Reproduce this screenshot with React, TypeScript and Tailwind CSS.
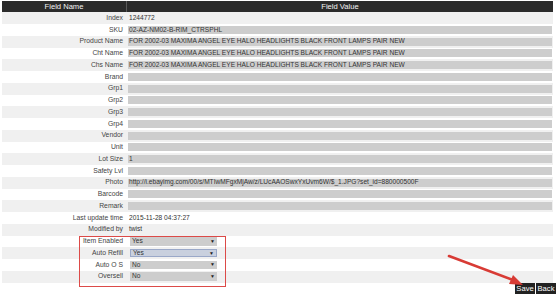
const rows: { label: string; value?: string; kind: "text" | "input" | "select" }[] = [
  { label: "Index", value: "1244772", kind: "text" },
  { label: "SKU", value: "02-AZ-NM02-B-RIM_CTRSPHL", kind: "input" },
  { label: "Product Name", value: "FOR 2002-03 MAXIMA ANGEL EYE HALO HEADLIGHTS BLACK FRONT LAMPS PAIR NEW", kind: "input" },
  { label: "Cht Name", value: "FOR 2002-03 MAXIMA ANGEL EYE HALO HEADLIGHTS BLACK FRONT LAMPS PAIR NEW", kind: "input" },
  { label: "Chs Name", value: "FOR 2002-03 MAXIMA ANGEL EYE HALO HEADLIGHTS BLACK FRONT LAMPS PAIR NEW", kind: "input" },
  { label: "Brand", kind: "input" },
  { label: "Grp1", kind: "input" },
  { label: "Grp2", kind: "input" },
  { label: "Grp3", kind: "input" },
  { label: "Grp4", kind: "input" },
  { label: "Vendor", kind: "input" },
  { label: "Unit", kind: "input" },
  { label: "Lot Size", value: "1", kind: "input" },
  { label: "Safety Lvl", kind: "input" },
  { label: "Photo", value: "http://i.ebayimg.com/00/s/MTIwMFgxMjAw/z/LUcAAOSwxYxUvm6W/$_1.JPG?set_id=880000500F", kind: "input" },
  { label: "Barcode", kind: "input" },
  { label: "Remark", kind: "input" },
  { label: "Last update time", value: "2015-11-28 04:37:27", kind: "text" },
  { label: "Modified by", value: "twist", kind: "text" },
  { label: "Item Enabled", value: "Yes", kind: "select" },
  { label: "Auto Refill", value: "Yes", kind: "select" },
  { label: "Auto O S", value: "No", kind: "select" },
  { label: "Oversell", value: "No", kind: "select" },
];

export default function App() {
  return (
    <div className="relative w-[557px] h-[294px] overflow-hidden bg-white font-['Liberation_Sans',Arial,sans-serif] text-[6.8px] leading-none">
      <div className="ml-[2px] w-[551px] pt-[1px]">
        {/* Header */}
        <div className="flex h-[11.3px] bg-[#2b2b2b] text-[#f4f4f4] text-[7.6px]">
          <div className="w-[124px] flex items-center justify-center">Field Name</div>
          <div className="w-px bg-[#5a5a5a]" />
          <div className="flex-1 flex items-center justify-center">Field Value</div>
        </div>

        {/* Rows */}
        {rows.map((r, i) => (
          <div
            key={r.label}
            className={`flex items-center h-[11.75px] ${i % 2 === 0 ? "bg-[#f0f0f0]" : "bg-white"}`}
          >
            <div className="w-[124px] pr-[3px] text-right text-[#444] whitespace-nowrap">{r.label}</div>
            <div className="flex-1 pl-[2px] text-[#333] text-[6.6px] whitespace-nowrap">
              {r.kind === "text" && <span className="pl-[1px]">{r.value}</span>}
              {r.kind === "input" && (
                <div className="h-[8px] w-[424px] bg-[#cdcdcd] flex items-center pl-[1px] overflow-hidden">
                  {r.value}
                </div>
              )}
              {r.kind === "select" && (
                <div
                  className={`h-[8.5px] w-[87px] ml-[2px] flex items-center justify-between px-[2px] ${
                    r.label === "Auto Refill" ? "bg-[#c9d0de] border border-[#9aa8c8]" : "bg-[#cdcdcd]"
                  }`}
                >
                  <span>{r.value}</span>
                  <span className="text-[5px] text-[#222]">▼</span>
                </div>
              )}
            </div>
          </div>
        ))}
      </div>

      {/* Save / Back */}
      <div className="flex justify-end gap-px pr-[1px]">
        <button className="bg-[#222] text-white text-[7.6px] h-[12px] w-[20px] flex items-center justify-center">Save</button>
        <button className="bg-[#222] text-white text-[7.6px] h-[12px] w-[20px] flex items-center justify-center">Back</button>
      </div>

      {/* Annotation: red box */}
      <div className="absolute left-[79px] top-[236px] w-[147px] h-[51px] border-[1.5px] border-[#dc4a48]" />

      {/* Annotation: arrow */}
      <svg className="absolute left-0 top-0" width="557" height="294" viewBox="0 0 557 294">
        <line x1="449" y1="256" x2="513" y2="280" stroke="#d83b35" strokeWidth="2.6" strokeLinecap="round" />
        <polygon points="523,285 509,284 513,275" fill="#d83b35" />
      </svg>
    </div>
  );
}
